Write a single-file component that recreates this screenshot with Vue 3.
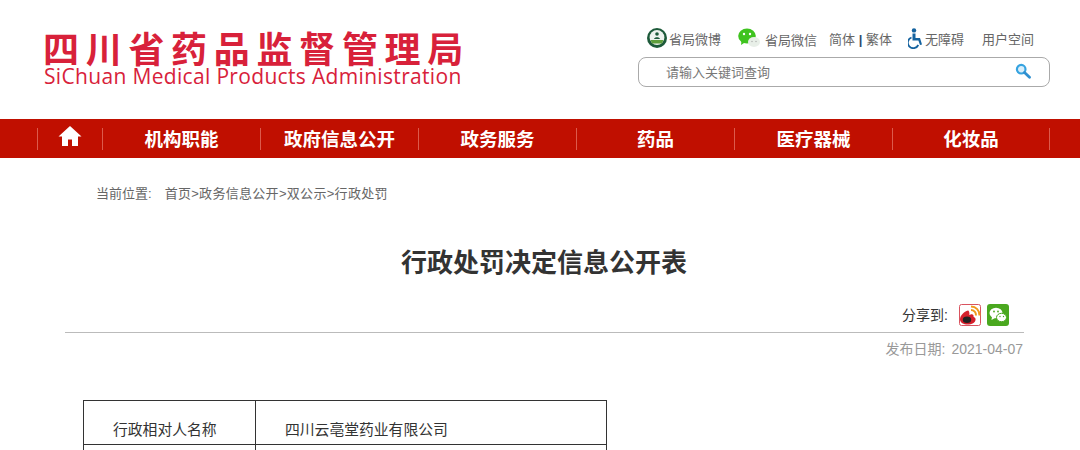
<template>
  <div class="page">
    <header class="top">
      <div class="logo">
        <div class="logo-cn">四川省药品监督管理局</div>
        <div class="logo-en">SiChuan Medical Products Administration</div>
      </div>
      <div class="tools">
        <div class="links">
          <svg class="ic-wb" viewBox="0 0 20 20" width="20" height="20">
            <circle cx="10" cy="10" r="10" fill="#1d5a3a" />
            <circle cx="10" cy="9.500" r="7.400" fill="#eef3ee" />
            <path d="M3.500 12h13l-1.500 3.600H5z" fill="#5f9e3c" />
            <circle cx="10" cy="6" r="1.800" fill="#1d5a3a" />
            <path d="M7 11c.5-2.500 5.500-2.500 6 0z" fill="#1d5a3a" />
          </svg>
          <span class="t-wb">省局微博</span>
          <svg class="ic-wx" viewBox="0 0 22 20" width="22" height="20">
            <ellipse cx="9" cy="8" rx="8.800" ry="7.500" fill="#3fc31f" />
            <path d="M3.500 12.500 3 17l4.500-3z" fill="#3fc31f" />
            <circle cx="6" cy="6" r="1.200" fill="#fff" />
            <circle cx="12" cy="6" r="1.200" fill="#fff" />
            <ellipse cx="16" cy="14" rx="6" ry="5" fill="#e8efe8" />
            <circle cx="14" cy="13.500" r=".7" fill="#aaa" />
            <circle cx="18" cy="13.500" r=".7" fill="#aaa" />
          </svg>
          <span class="t-wx">省局微信</span>
          <span class="t-lang">简体 <b class="bar">|</b> 繁体</span>
          <svg class="ic-ac" viewBox="0 0 15 21" width="15" height="21">
            <circle cx="6" cy="2.400" r="2.200" fill="#14629f" />
            <path d="M4.500 5.500h3v4.500h4.500l2 6.500-2 .6-1.600-4.600H4.500z" fill="#14629f" />
            <path d="M3.500 9.500a5.500 5.500 0 1 0 6.800 7.500" fill="none" stroke="#14629f" stroke-width="1.800" />
          </svg>
          <span class="t-ac">无障碍</span>
          <span class="t-user">用户空间</span>
        </div>
        <div class="search">
          <span class="ph">请输入关键词查询</span>
          <svg viewBox="0 0 16 16" width="16" height="16">
            <circle cx="6.200" cy="6.200" r="4.300" fill="#d9eefa" stroke="#36a3e0" stroke-width="2.200" />
            <path d="M9.500 9.500l5 4.800" stroke="#2f8fd0" stroke-width="2.800" stroke-linecap="round" />
          </svg>
        </div>
      </div>
    </header>

    <nav class="nav">
      <a class="item home">
        <svg viewBox="0 0 24 22" width="24" height="22">
          <path d="M12 1 0.500 11.500h3.500V21h6v-6.500h4V21h6v-9.500h3.500z" fill="#fff" />
        </svg>
      </a>
      <a v-for="n in navs" :key="n" class="item">{{ n }}</a>
    </nav>

    <div class="crumb">
      <span class="here">当前位置:</span>
      <span class="path">首页&gt;政务信息公开&gt;双公示&gt;行政处罚</span>
    </div>

    <h1 class="title">行政处罚决定信息公开表</h1>

    <div class="share">
      <span class="share-label">分享到:</span>
      <svg class="sh" viewBox="0 0 22 22" width="22" height="22">
        <rect x=".5" y=".5" width="21" height="21" rx="2" fill="#fff" stroke="#d9535f" />
        <path d="M9 6.500C5 7.500 1 11.500 1 15.500c0 3.500 4.500 5.500 9 5 4.500-.5 7-3 6.500-5.800-.3-1.200-1.600-1.700-2-2 .5-1.700-.7-2.700-2.200-2.400l-2 .6c.6-3-.9-4.700-1.300-4.400z" fill="#d4202c" />
        <ellipse cx="8" cy="15.800" rx="4.200" ry="3.300" fill="#222" />
        <path d="M12 6a5 5 0 0 1 5 5.500M12 2.500a8.500 8.500 0 0 1 8.500 9" fill="none" stroke="#f09a1e" stroke-width="2" />
      </svg>
      <svg class="sh" viewBox="0 0 22 22" width="22" height="22">
        <rect width="22" height="22" rx="3" fill="#4aa81f" />
        <ellipse cx="9" cy="9" rx="6.500" ry="5.300" fill="#fff" />
        <path d="M5 12.500 4.500 16l3.500-2z" fill="#fff" />
        <ellipse cx="14.500" cy="13.500" rx="5" ry="4.200" fill="#fff" stroke="#4aa81f" />
        <circle cx="7" cy="7.500" r=".9" fill="#4aa81f" />
        <circle cx="11" cy="7.500" r=".9" fill="#4aa81f" />
        <circle cx="13" cy="12.500" r=".7" fill="#4aa81f" />
        <circle cx="16.500" cy="12.500" r=".7" fill="#4aa81f" />
      </svg>
    </div>
    <div class="date"><span class="date-label">发布日期:</span>2021-04-07</div>

    <table class="info">
      <tbody>
        <tr>
          <td class="k">行政相对人名称</td>
          <td class="v">四川云亳堂药业有限公司</td>
        </tr>
        <tr>
          <td class="k"></td>
          <td class="v"></td>
        </tr>
      </tbody>
    </table>
  </div>
</template>

<script setup>
const navs = ['机构职能', '政府信息公开', '政务服务', '药品', '医疗器械', '化妆品']
</script>

<style>
html, body { margin: 0; background: #fff; overflow: hidden; }
</style>

<style scoped>
.page {
  width: 1080px;
  height: 450px;
  overflow: hidden;
  font-family: "Liberation Sans", "Noto Sans CJK SC", sans-serif;
  color: #666;
}
.top {
  height: 119px;
  display: flex;
  justify-content: space-between;
  box-sizing: border-box;
  padding: 24px 30px 0 43px;
}
.logo { color: #d8213a; margin-top: 5px; }
.logo-cn {
  font-family: "Noto Sans CJK SC", sans-serif;
  font-weight: 700;
  font-size: 36px;
  line-height: 36px;
  letter-spacing: 6.700px;
  white-space: nowrap;
}
.logo-en {
  font-family: "Open Sans", sans-serif;
  font-weight: 500;
  font-size: 21px;
  line-height: 18px;
  margin-top: 2px;
  white-space: nowrap;
  letter-spacing: .33px;
  padding-left: 1px;
}
.tools { width: 412px; }
.links {
  height: 28px;
  margin-bottom: 5px;
  display: flex;
  align-items: center;
  font-size: 13px;
  white-space: nowrap;
}
.ic-wb { margin-left: 9px; }
.t-wb { margin-left: 2px; }
.ic-wx { margin-left: 17px; }
.t-wx { margin-left: 5px; margin-top: 2px; }
.t-lang { margin-left: 12px; }
.bar { color: #2c4a6b; font-weight: 700; }
.ic-ac { margin-left: 16px; }
.t-ac { margin-left: 2px; }
.t-user { margin-left: 18px; }
.search {
  height: 30px;
  box-sizing: border-box;
  border: 1px solid #aaa;
  border-radius: 8px;
  display: flex;
  align-items: center;
  justify-content: space-between;
  padding: 0 18px 2px 27px;
}
.ph { font-size: 13px; color: #777; }
.nav {
  height: 39px;
  background: #c00f00;
  display: flex;
  align-items: center;
  padding-left: 37px;
  box-sizing: border-box;
}
.item {
  width: 158px;
  height: 22px;
  line-height: 23px;
  flex: none;
  box-sizing: border-box;
  border-left: 1px solid #dc5a4c;
  text-align: center;
  color: #fff;
  font-size: 18.5px;
  font-weight: 700;
}
.item:last-child { border-right: 1px solid #dc5a4c; }
.home { width: 65px; display: flex; align-items: center; justify-content: center; padding-bottom: 5px; }
.crumb {
  margin-top: 27px;
  padding-left: 96px;
  font-size: 13px;
  line-height: 18px;
  color: #666;
}
.here { margin-right: 13px; }
.path { letter-spacing: .3px; }
.title {
  margin: 42px 0 0;
  padding-left: 8px;
  text-align: center;
  font-size: 26px;
  line-height: 36px;
  font-weight: 700;
  color: #333;
}
.share {
  margin: 23px 0 0 65px;
  width: 959px;
  box-sizing: border-box;
  height: 29px;
  border-bottom: 1px solid #bbb;
  display: flex;
  align-items: flex-start;
  justify-content: flex-end;
  padding-right: 15px;
  font-size: 14px;
  color: #333;
}
.share-label { line-height: 22px; margin-right: 11px; }
.sh + .sh { margin-left: 6px; }
.date {
  margin: 7px 0 0 65px;
  width: 958px;
  text-align: right;
  font-size: 14px;
  line-height: 18px;
  color: #999;
}
.date-label { margin-right: 6px; }
.info {
  margin: 42px 0 0 83px;
  width: 524px;
  border-collapse: collapse;
  table-layout: fixed;
  font-size: 14.8px;
  color: #333;
}
.info td {
  border: 1px solid #333;
  height: 44px;
  box-sizing: border-box;
  vertical-align: bottom;
  padding: 0 0 3px 29px;
  line-height: 22px;
}
.info .k { width: 172px; }
</style>
